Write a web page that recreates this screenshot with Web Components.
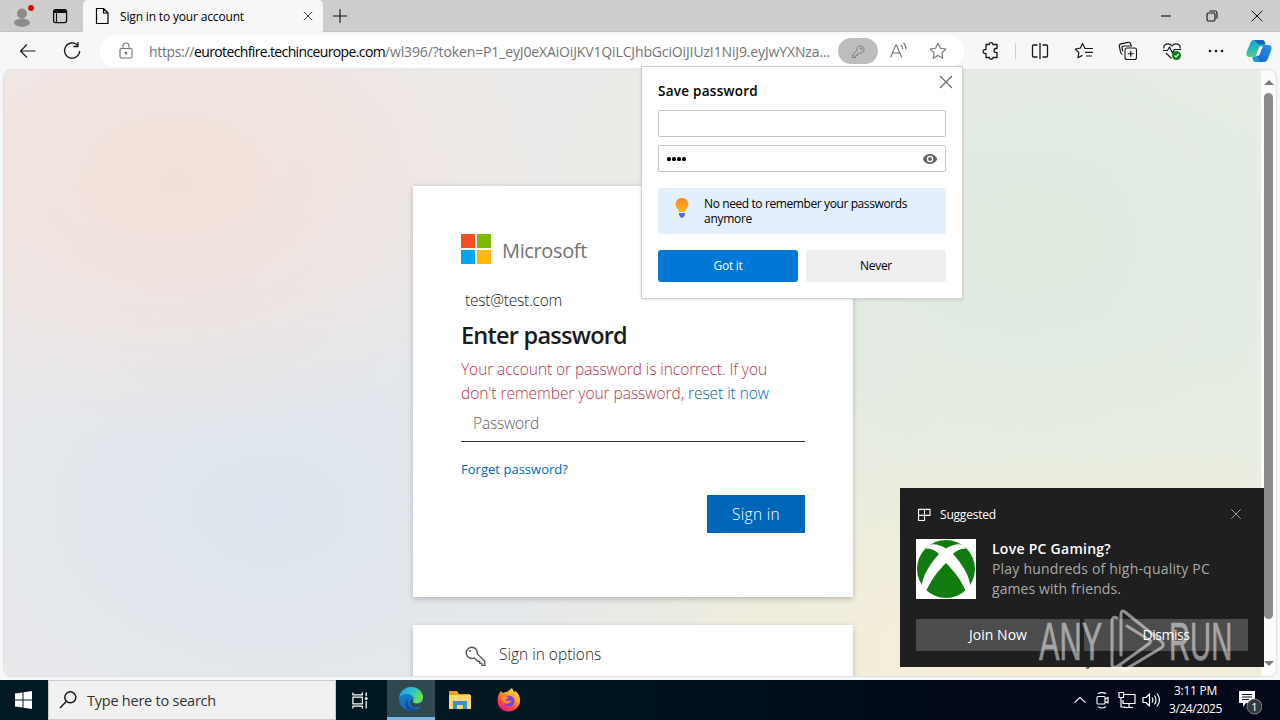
<!DOCTYPE html>
<html lang="en"><head><meta charset="utf-8"><title>Sign in to your account</title>
<style>html,body{margin:0;height:720px;width:1280px;overflow:hidden;font-family:"Open Sans","Noto Sans",sans-serif;color:#111}</style></head>
<body><desktop-screen></desktop-screen>
<script>
const define=(name,css,html)=>customElements.define(name,class extends HTMLElement{
  constructor(){super();this.attachShadow({mode:'open'}).innerHTML=`<style>*{box-sizing:border-box}${css}</style>${html}`;}
});
// A single line of text whose tracking is adjusted to a given width.
customElements.define('fit-text',class extends HTMLElement{
  constructor(){super();this.attachShadow({mode:'open'}).innerHTML='<style>:host{display:inline-block;white-space:pre;flex:none}span{display:inline-block}</style><span><slot></slot></span>';}
  connectedCallback(){
    const s=this.shadowRoot.querySelector('span'),w=+this.getAttribute('w');
    this.style.width=w+'px';s.style.letterSpacing='0px';
    const n=this.textContent.length,nat=s.getBoundingClientRect().width;
    if(nat)s.style.letterSpacing=((w-nat)/n).toFixed(3)+'px';
  }
});
// Line icons on a 20px grid.
const ICONS={
 back:'<path d="M17.5 10H2.5M9 3.5L2.5 10 9 16.5"/>',
 reload:'<path d="M15.5 4.2A7.6 7.6 0 1 0 17.7 10M16 1v4.5h-4.5" stroke-width="1.3"/>',
 lock:'<rect x="4" y="7.5" width="12" height="9.5" rx="1.5"/><path d="M7 7.5V5a3 3 0 0 1 6 0v2.5"/><circle cx="10" cy="12.2" r=".8" fill="currentColor"/>',
 key:'<path d="M11.2 11.8a4.2 4.2 0 1 0-3-3L3 14v3h3.4v-2h2v-2h1.7z"/><circle cx="13.2" cy="6.8" r=".7" fill="currentColor"/>',
 read:'<path d="M2.5 16.5L7.8 4h.6l5.3 12.500M4.500 12h7.200M13 4c1.300 1 1.700 2.400 1.600 4M15.500 2c2 1.800 2.600 4 2.400 6.500"/>',
 star:'<path d="M10 2.300l2.400 4.900 5.400.8-3.900 3.800.9 5.400-4.800-2.600-4.800 2.600.9-5.400L2.200 8l5.400-.8z"/>',
 ext:'<path d="M5 3.500h3.200c-.2-2.600 3.900-2.600 3.700 0H16v4h-1c-2.600 0-2.600 4 0 4h1v5h-4c.2 2.300-3.900 2.300-3.700 0H5v-4c-4 .3-4-4.200 0-4z" stroke-width="1.3"/>',
 split:'<path d="M10 2v16M7.500 4H3.500a1 1 0 0 0-1 1v10a1 1 0 0 0 1 1h4M12.500 4h4a1 1 0 0 1 1 1v10a1 1 0 0 1-1 1h-4" stroke-width="1.300"/>',
 favs:'<path d="M12 7.500h-1L8.500 2.500 6.300 7.200l-5 .8 3.600 3.600-.9 5.200 4.400-2.400M11.500 7.500H19M11 11.300h8M12 15h6" stroke-width="1.200"/>',
 coll:'<rect x="7" y="7" width="11.500" height="11.500" rx="2"/><path d="M12.750 9.800v6M9.750 12.750h6M4.500 13.500C3 13 2.800 12 2.500 11L1.300 5.200C1 3.800 2 3 3 2.800l7-1.500c1.500-.3 2.500.7 2.700 1.700l.3 1.500M4.800 10.500L4 7C3.800 5.500 5 5 6 5h8" stroke-width="1.200"/>',
 heart:'<path d="M2 7.500C1 3 7 1 10 5c3-4 9-2 8 2.500M1 9.500h4.500l2-3.500 3 6 1.800-3.500H19M4 12l5.500 5.500" stroke-width="1.200"/><circle cx="14.500" cy="14.500" r="4.500" fill="#0c7d14" stroke="none"/><path d="M12.500 14.500l1.500 1.500 2.800-3" stroke="#fff"/>',
 dots:'<g fill="currentColor" stroke="none"><circle cx="4" cy="10" r="1.300"/><circle cx="10" cy="10" r="1.300"/><circle cx="16" cy="10" r="1.300"/></g>',
 x:'<path d="M4 4l12 12M16 4L4 16"/>',
 plus:'<path d="M10 3v14M3 10h14"/>',
 min:'<path d="M5 10h10"/>',
 restore:'<rect x="5" y="7" width="8" height="8" rx="1.500"/><path d="M7.500 5h5.500a2 2 0 0 1 2 2v5.500"/>',
 page:'<path d="M4.500 2.500h7l4.500 4.500v10.500H4.500zM11.500 2.500V7H16" stroke-width="1.200"/>',
 tabs:'<rect x="3.600" y="3.600" width="13" height="13" rx="2" stroke-width="1.300"/><path d="M4 5.500h12.500" stroke-width="3"/><path d="M6.500 5v11"/>',
 keybig:'<path d="M8.800 11.300A5.300 5.300 0 1 1 11.700 7.500L18.800 14.500v4H16v-2h-2v-2h-2z" stroke-width="1.300"/><circle cx="4.800" cy="4.800" r="1" fill="currentColor" stroke="none"/>',
 eye:'<path d="M1 10C4 1.500 16 1.500 19 10 16 18.500 4 18.500 1 10z" fill="currentColor" stroke="none"/><circle cx="10" cy="10" r="4" fill="#fff" stroke="none"/><circle cx="10" cy="10" r="2.400" fill="currentColor" stroke="none"/>',
 search:'<circle cx="12.300" cy="7.300" r="5.500" stroke-width="1.400"/><path d="M8.200 11.500L2 18" stroke-width="1.400"/>',
 task:'<path d="M2 1.500v2.500h10V1.500M2 18.500V16h10v2.500M2 6.500h10v7H2zM16 1.500v4M16 10.500v8" stroke-width="1.300"/><circle cx="16" cy="8" r="1.500" fill="currentColor" stroke="none"/>',
 up:'<path d="M4 13l6-6 6 6" stroke-width="1.300"/>',
 cam:'<rect x="4" y="6.500" width="8" height="7.500" rx="1"/><path d="M12 9l3-1.500v5.500l-3-1.500M5 3.800c1.500-1.700 6.500-1.700 8 0M5 16.700c1.500 1.700 6.500 1.700 8 0" stroke-width="1.200"/>',
 net:'<path d="M7 4.500h11v9H6V10M2 2.500h4.500v5H2zM4 7.500V17h4M7 17.500h9M12 13.500v4" stroke-width="1.200"/>',
 vol:'<path d="M2 7.500h3l3.500-3.500v12L5 12.500H2zM11 7.500c1 1.500 1 3.500 0 5M13.500 5.500c2 2.500 2 6.500 0 9M16 3.500c3 4 3 9 0 13" stroke-width="1.200"/>',
 grid:'<path d="M3 4h13.500v7H10v6H3zM3 11h7V4" stroke-width="1.300"/>'
};
customElements.define('ui-icon',class extends HTMLElement{
  constructor(){super();this.attachShadow({mode:'open'});}
  connectedCallback(){const s=this.getAttribute('s')||20;
    this.shadowRoot.innerHTML=`<style>:host{display:block;flex:none;width:${s}px;height:${s}px}svg{display:block}</style><svg width="${s}" height="${s}" viewBox="0 0 20 20" fill="none" stroke="currentColor" stroke-width="1.1" stroke-linejoin="round">${ICONS[this.getAttribute('n')]}</svg>`;}
});
define('tab-strip',`:host{display:flex;height:32px;background:#cdcdcd;align-items:center;font-size:12px;box-shadow:inset 0 -1px #c2c2c2}
.av{margin-left:11px;width:24px;height:26px}.av svg{display:block}
.t{margin-left:15px}.tab{display:flex;align-items:center;width:240px;height:32px;margin-left:13px;background:#f7f7f7;border-radius:5px 5px 0 0;padding-left:9px;color:#000}
.tab fit-text{margin-left:8px;margin-right:56px}.tab ui-icon:last-child{margin-left:1px}.p{margin-left:7px}.sp{flex:1}.w{display:flex;gap:26px;margin-right:14px}`,
`<div class="av"><svg width="24" height="26" viewBox="0 0 24 26"><circle cx="11" cy="14" r="10.500" fill="#d3d1cf"/><circle cx="11" cy="10.500" r="5" fill="#8d8b89"/><path d="M3 20c0-6 16-6 16 0-2 5-14 5-16 0z" fill="#8d8b89"/><circle cx="20" cy="5" r="3" fill="#e5000c"/></svg></div>
<ui-icon class="t" n="tabs"></ui-icon><div class="tab"><ui-icon n="page"></ui-icon><fit-text w="124">Sign in to your account</fit-text><ui-icon n="x" s="14"></ui-icon></div><ui-icon class="p" n="plus"></ui-icon><div class="sp"></div><div class="w"><ui-icon n="min"></ui-icon><ui-icon n="restore"></ui-icon><ui-icon n="x" s="18" style="margin-top:1px"></ui-icon></div>`);
define('tool-bar',`:host{display:flex;height:38px;background:#f7f7f7;align-items:center;color:#1a1a1a}
.b{margin-left:18px}.r{margin-left:24px}.url{display:flex;align-items:center;width:864px;height:32px;margin-left:18px;border-radius:16px;background:#fff;padding-left:16px;font-size:14px;color:#747474}
.url .h{color:#000}.url .f{margin-left:13px}.pill{display:flex;align-items:center;justify-content:center;width:40px;height:26px;border-radius:13px;background:#bdbdbd;margin-left:8px;color:#777}
.tools{display:flex;align-items:center;margin-left:17px}.bar{width:1px;height:16px;background:#d0d0d0;margin:0 14px 0 14px}.cop{margin-left:20px}
ui-icon+ui-icon{margin-left:24.100px}.url ui-icon+ui-icon{margin-left:20px}`,
`<ui-icon class="b" n="back"></ui-icon><ui-icon class="r" n="reload"></ui-icon>
<div class="url"><ui-icon n="lock"></ui-icon><fit-text class="f" w="45">https://</fit-text><fit-text class="h" w="191">eurotechfire.techinceurope.com</fit-text><fit-text w="445">/wl396/?token=P1_eyJ0eXAiOiJKV1QiLCJhbGciOiJIUzI1NiJ9.eyJwYXNza...</fit-text><div class="pill"><ui-icon n="key" s="17"></ui-icon></div><ui-icon n="read" style="margin-left:10px"></ui-icon><ui-icon n="star"></ui-icon></div>
<div class="tools"><ui-icon n="ext"></ui-icon><div class="bar"></div><ui-icon n="split"></ui-icon><ui-icon n="favs"></ui-icon><ui-icon n="coll"></ui-icon><ui-icon n="heart"></ui-icon><ui-icon n="dots"></ui-icon></div>
<svg class="cop" width="26" height="26" viewBox="0 0 26 26"><defs><linearGradient id="a" x2=".3" y2="1"><stop stop-color="#169bd5"/><stop offset=".5" stop-color="#20b8c0"/><stop offset="1" stop-color="#59cc83"/></linearGradient><linearGradient id="b" x1="1" x2="0" y2="1"><stop stop-color="#2c8fe8"/><stop offset="1" stop-color="#1160cf"/></linearGradient></defs><path d="M8 2h8c2 0 3 2 3.500 4l-4 1.500L12 17c-.5 1.500-1.500 2-3 2H4c-4 0-4-3-3-6L4.500 4.500C5.200 2.800 6.500 2 8 2z" fill="url(#a)"/><path d="M8 2h8c2 0 3 2 3.500 4.500h-6c-2-.5-3.500-3-5.500-4.500z" fill="#1763b9"/><path d="M18 24h-8c-2 0-3-2-3.500-4l4-1.500L14 9c.5-1.500 1.500-2 3-2h5c4 0 4 3 3 6l-3.500 8.500c-.7 1.700-2 2.500-3.500 2.500z" fill="url(#b)"/><path d="M6.500 19h5.300l2.200 4.900L10 24c-2 0-3-2-3.500-5z" fill="#159bd7"/><path d="M13.500 8.500L17 8l-3.800 9.500-3.400.5z" fill="#fff"/></svg>`);
define('ms-logo',`:host{display:flex;align-items:center;font-size:20px;color:#737373;height:30px}.g{display:grid;grid-template-columns:14px 14px;gap:2px;margin-right:11px}.g i{height:14px}`,
`<div class="g"><i style="background:#f25022"></i><i style="background:#7fba00"></i><i style="background:#00a4ef"></i><i style="background:#ffb900"></i></div><slot></slot>`);
define('sign-in-card',`:host{display:block;width:440px;height:411px;background:#fff;box-shadow:0 2px 6px rgba(0,0,0,.22);padding:48px 48px 0;font-size:15.500px;font-weight:300;color:#1b1b1b}
ms-logo{font-weight:500}ms-logo fit-text{margin-top:2px}.m{margin:25px 0 0 4px;height:22px;line-height:22px}h1{margin:7px 0 0;font-size:23.500px;font-weight:600;line-height:34px;height:34px}
.e{color:#b8324a;height:48px;line-height:24px;margin-top:5px;white-space:nowrap;display:flex;flex-wrap:wrap}a{color:#0067b8;margin-left:4px}
.i{height:37px;line-height:36px;border-bottom:1px solid #333;padding-left:12px;color:#666;}
.f{font-size:13px;color:#0067b8;font-weight:400;margin-top:17px;line-height:20px;height:20px}
.b{width:98px;height:38px;background:#0067b8;color:#fff;margin:16px 0 0 auto;line-height:38px;text-align:center}`,
`<ms-logo><fit-text w="85">Microsoft</fit-text></ms-logo><div class="m"><fit-text w="97">test@test.com</fit-text></div><h1><fit-text w="166">Enter password</fit-text></h1>
<div class="e"><fit-text w="306">Your account or password is incorrect. If you</fit-text><fit-text w="223">don't remember your password,</fit-text><a><fit-text w="81">reset it now</fit-text></a></div>
<div class="i"><fit-text w="66">Password</fit-text></div><div class="f"><fit-text w="107">Forget password?</fit-text></div><div class="b"><fit-text w="48">Sign in</fit-text></div>`);
define('option-card',`:host{display:flex;width:440px;height:90px;margin-top:28px;background:#fff;box-shadow:0 2px 6px rgba(0,0,0,.22);padding:17px 53px;font-size:15.500px;font-weight:300;color:#1b1b1b;line-height:24px}ui-icon{margin:4px 13px 0 -1px;color:#555}`,
`<ui-icon n="keybig" s="21"></ui-icon><fit-text w="105"><slot></slot></fit-text>`);
define('scroll-rail',`:host{display:flex;flex-direction:column;align-items:center;width:15px;background:#fbfbfb;padding:10px 0 10px}.u,.d{border:5px solid transparent;border-top:0;border-bottom:5px solid #7b7b7b}.d{border-bottom:0;border-top:5px solid #7b7b7b;margin-top:auto}.th{width:9px;height:526px;border-radius:5px;background:#8b8b8b;margin-top:8px}`,`<div class="u"></div><div class="th"></div><div class="d"></div>`);
define('web-page',`:host{display:flex;margin:0 4px 4px;height:606px;border-radius:8px;overflow:hidden;box-shadow:0 0 2px #aaa;background:radial-gradient(ellipse 360px 260px at 171px 112px,#f3e0d8,#f2e2dd99 50%,#f0e6e200),radial-gradient(ellipse 500px 360px at 264px 440px,#dde5ee,#dfe6ee99 50%,#e6e8ec00),radial-gradient(ellipse 480px 330px at 1020px 170px,#dfeadf,#e1ebe199 55%,#e8ece800),radial-gradient(ellipse 560px 330px at 1020px 590px,#f9eed7,#f0eed8aa 50%,#eeeee200),linear-gradient(90deg,#efebea,#ecebe9 50%,#e9efe6)}
main{flex:1;padding:116px 0 0 409px}`,
`<main><sign-in-card></sign-in-card><option-card>Sign in options</option-card></main><scroll-rail></scroll-rail>`);
define('save-password',`:host{display:block;width:322px;height:233px;background:#fff;border:1px solid #d0d0d0;box-shadow:0 1px 3px rgba(0,0,0,.12);padding:0 16px;font-size:12px;color:#000}
header{display:flex;height:43px;font-size:13.500px;font-weight:600;line-height:20px;padding-top:14px;justify-content:space-between}header ui-icon{color:#666;margin:-9px -10px 0 0}
.in{height:27px;border:1px solid #c3c3c3;border-radius:2px;margin-bottom:8px;display:flex;align-items:center;justify-content:space-between;padding:0 7px 0 8px}.in ui-icon{color:#666}
.d{display:flex;gap:1px}.d i{width:4px;height:4px;border-radius:1.500px;background:#000}
.tip{display:flex;background:#e3f0fb;border-radius:3px;height:46px;margin-top:16px;padding:8px 0 0 17px;line-height:15px}.tip svg{margin:2px 15px 0 0}.tip div{display:flex;flex-direction:column}
.bs{display:flex;gap:8px;margin-top:16px}.bs div{flex:1;height:32px;border-radius:3px;text-align:center;line-height:32px;background:#eee}.bs .a{background:#0078d7;color:#fff}`,
`<header><fit-text w="100">Save password</fit-text><ui-icon n="x"></ui-icon></header><div class="in"></div><div class="in"><div class="d"><i></i><i></i><i></i><i></i></div><ui-icon n="eye" s="16"></ui-icon></div>
<div class="tip"><svg width="14" height="20" viewBox="0 0 14 20"><defs><linearGradient id="g" x2="0" y2="1"><stop stop-color="#f7863a"/><stop offset="1" stop-color="#ffb900"/></linearGradient></defs><path d="M7 0a6.300 6.300 0 0 1 4 11.200L10 14H4l-1-2.800A6.300 6.300 0 0 1 7 0z" fill="url(#g)"/><path d="M4 15h6v2l-2 2.800H6L4 17z" fill="#4f6bed"/></svg><div><fit-text w="203">No need to remember your passwords</fit-text><fit-text w="48">anymore</fit-text></div></div>
<div class="bs"><div class="a"><fit-text w="29">Got it</fit-text></div><div><fit-text w="32">Never</fit-text></div></div>`);
define('toast-card',`:host{display:block;width:364px;height:179px;background:#1f1f1f;padding:16px;color:#fff;font-size:14px}
header{display:flex;align-items:center;height:21px;font-size:12px}header fit-text{margin-left:7px}header .c{margin:-2px 4px 0 auto;color:#aaa}
.m{display:flex;margin-top:14px;height:60px;gap:16px;line-height:20px;color:#a9a9a9}.m>div{display:flex;flex-direction:column}.m b{font-weight:600;color:#fff;height:20px;display:block}
.b{display:flex;gap:4px;margin-top:20px}.b div{flex:1;height:32px;line-height:32px;background:#4c4c4c;text-align:center}`,
`<header><ui-icon n="grid" s="17"></ui-icon><fit-text w="56">Suggested</fit-text><ui-icon class="c" n="x" s="16"></ui-icon></header>
<div class="m"><svg width="60" height="60" viewBox="0 0 60 60"><path d="M0 0h60v60H0z" fill="#fff"/><circle cx="30" cy="30" r="29" fill="#107c10"/><path d="M13 6c5-2 12 .500 17 3.500C35 6.500 42 4 47 6l3 4c-5-1-10 2-13 5 9 10 17 22 17.500 34l-4 5C46 42 38 32 30 24 22 32 14 42 9.500 54l-4-5C6 37 14 25 23 15c-3-3-8-6-13-5z" fill="#fff"/></svg><div><b><fit-text w="119">Love PC Gaming?</fit-text></b><fit-text w="218">Play hundreds of high-quality PC</fit-text><fit-text w="129">games with friends.</fit-text></div></div>
<div class="b"><div><fit-text w="58">Join Now</fit-text></div><div><fit-text w="47">Dismiss</fit-text></div></div>`);
define('water-mark',`:host{display:block;width:200px;height:64px;opacity:.5;pointer-events:none}svg{display:block;overflow:visible}text{font-family:"Liberation Sans",sans-serif;font-size:53px}`,
`<svg width="200" height="64" viewBox="0 0 200 64"><g fill="#fff" stroke="#fff" stroke-width=".6"><text transform="translate(1 51) scale(.62 1)" textLength="102" lengthAdjust="spacingAndGlyphs">ANY</text><text transform="translate(131 51) scale(.62 1)" textLength="102" lengthAdjust="spacingAndGlyphs">RUN</text></g><g fill="none" stroke="#fff" stroke-width="3" stroke-linejoin="round" stroke-linecap="round"><path d="M83 46V5c0-3 2-4 4-2L123 32c3 3 3 5 0 7L88 60c-3 1-5 0-5-2M79 9c-3-2-5 0-5 3v43c0 4 3 4 6 2l32-23M89 17l24 15"/></g></svg>`);
define('task-bar',`:host{display:flex;height:40px;align-items:center;color:#fff;background:linear-gradient(90deg,#001922,#001722 40%,#010a1b 70%,#020817)}
.s{width:48px;padding-left:15px}.s svg{display:block}.q{display:flex;align-items:center;width:288px;height:40px;background:#f1f1f1;border:1px solid #c9c9c9;padding-left:9px;font-size:14.500px;color:#333}.q ui-icon{color:#111}.q fit-text{margin-left:9px}
.t{margin-left:15px}.e{margin-left:17px;width:48px;height:40px;background:#304850;border-bottom:3px solid #76b9ed;padding:7px 0 0 12px}.f{margin-left:13px}.x{margin-left:25px}
.tray{margin-left:auto;display:flex;align-items:center;gap:4px}.tm{display:flex;flex-direction:column;align-items:center;font-size:12px;line-height:18px;margin-left:4px}.n{margin:0 18px 0 6px;height:30px}.n svg{display:block}`,
`<div class="s"><svg width="18" height="18" viewBox="0 0 18 18" fill="#fff"><path d="M0 2.500l7.500-1V8.500H0zM8.500 1.300L17 0v8.500H8.500zM0 9.500h7.500v7L0 15.500zM8.500 9.500H17V18l-8.500-1.300z"/></svg></div>
<div class="q"><ui-icon n="search"></ui-icon><fit-text w="129">Type here to search</fit-text></div><ui-icon class="t" n="task" s="19"></ui-icon>
<div class="e"><svg width="24" height="24" viewBox="0 0 24 24"><defs><linearGradient id="a" x2="1" y2=".5"><stop stop-color="#1c9de0"/><stop offset=".55" stop-color="#2fc3c6"/><stop offset="1" stop-color="#6be04e"/></linearGradient><linearGradient id="b" x2="0" y2="1"><stop stop-color="#1687cf"/><stop offset="1" stop-color="#1465ba"/></linearGradient></defs><circle cx="12" cy="12" r="12" fill="url(#b)"/><path d="M.2 10C2 1 10 0 12 0c8 0 12 6 12 10 0 4-3 6.500-6.500 6.500-3 0-4-1.300-4-2 0-.8 1-1.200 1-3 0-2.500-3-4.500-6.500-4.500-3.500 0-7 1.500-7.800 3z" fill="url(#a)"/><path d="M8.500 11c-1.500 6 3 11.500 9 11-2 1.500-4 2-5.500 2C6.500 24 4.500 15 8.500 11z" fill="#174c93"/><path d="M14 14.200c-.8 1.200 1 2.500 3.500 2.500 2.500 0 5-.8 7-2.500-1 4-4.500 6-8 6-4.500 0-6.500-5-4-7.500 1-.8 2-.2 1.500 1.500z" fill="#304850"/></svg></div>
<svg class="f" width="24" height="20" viewBox="0 0 24 20"><path d="M1 1h8l2 3h11v15H1z" fill="#e8a51c"/><path d="M1 5h22v14H1z" fill="#ffd667"/><path d="M5 11h14v8h-4v-4H9v4H5z" fill="#3292d4"/></svg>
<svg class="x" width="24" height="24" viewBox="0 0 24 24"><defs><linearGradient id="c" x1=".8" x2=".2" y2="1"><stop stop-color="#ffe940"/><stop offset=".4" stop-color="#ff9822"/><stop offset=".75" stop-color="#ff3850"/><stop offset="1" stop-color="#e31587"/></linearGradient></defs><path d="M2 6l2-3 2 2c1-1 3-1 4-1l5-4 2 4 1.500-1C23 7 24 12 22.500 16c-4 10-18 10-21.500 0C0 13 .5 9 2 6z" fill="url(#c)"/><circle cx="12" cy="13" r="5.500" fill="#7543e5"/><path d="M4 9c3-2 5 0 8 0-1 2-3 1.500-3.500 3 1.500 2 4 0 6 .5-2 5-10 4-10.500-3.500z" fill="#ff8b25"/></svg>
<div class="tray"><ui-icon n="up" s="18"></ui-icon><ui-icon n="cam"></ui-icon><ui-icon n="net"></ui-icon><ui-icon n="vol"></ui-icon><div class="tm"><fit-text w="43">3:11 PM</fit-text><fit-text w="53">3/24/2025</fit-text></div><div class="n"><svg width="30" height="30" viewBox="0 0 30 30"><path d="M7 6h16v12h-9l-3 4v-4H7z" fill="#fff"/><path d="M10 9.500h10M10 12h10M10 14.500h7" stroke="#07101c"/><circle cx="22.500" cy="21.500" r="7.500" fill="#35383d" stroke="#888"/><text x="22.500" y="25.500" text-anchor="middle" font-size="11" fill="#fff">1</text></svg></div></div>`);
define('desktop-screen',`:host{display:flex;flex-direction:column;width:1280px;height:720px;position:relative;background:#f5f7f9;overflow:hidden}
save-password{position:absolute;left:641px;top:66px}toast-card{position:absolute;left:900px;top:488px}water-mark{position:absolute;left:1038px;top:609px}.y{position:absolute;left:1086px;top:666px}`,
`<tab-strip></tab-strip><tool-bar></tool-bar><web-page></web-page><save-password></save-password><svg class="y" width="5" height="4"><path d="M4 0Q3 3 0 2" fill="none" stroke="#000"/></svg><toast-card></toast-card><water-mark></water-mark><task-bar></task-bar>`);
</script></body></html>
